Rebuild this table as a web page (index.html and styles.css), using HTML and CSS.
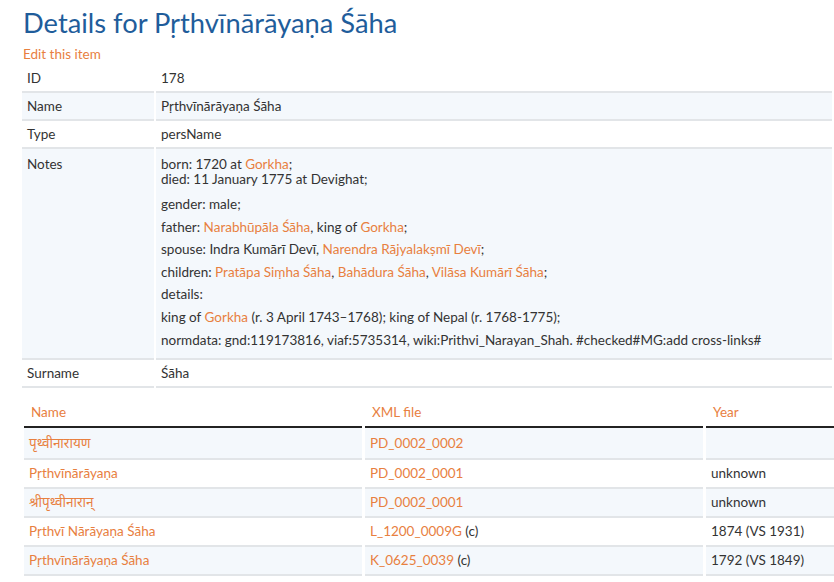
FILE: index.html
```html
<!DOCTYPE html>
<html>
<head>
<meta charset="utf-8">
<link rel="stylesheet" href="styles.css">
</head>
<body>
<div class="page">
  <h1 class="title">Details for Pṛthvīnārāyaṇa Śāha</h1>
  <a class="edit" href="#">Edit this item</a>
  <table class="details">
    <tr><td class="key">ID</td><td>178</td></tr>
    <tr class="alt"><td class="key">Name</td><td>Pṛthvīnārāyaṇa Śāha</td></tr>
    <tr><td class="key">Type</td><td>persName</td></tr>
    <tr class="alt notes-row"><td class="key">Notes</td><td>
      <div class="first">born: 1720 at <a href="#">Gorkha</a>;<br>died: 11 January 1775 at Devighat;</div>
      <div class="line">gender: male;</div>
      <div class="line">father: <a href="#">Narabhūpāla Śāha</a>, king of <a href="#">Gorkha</a>;</div>
      <div class="line">spouse: Indra Kumārī Devī, <a href="#">Narendra Rājyalakṣmī Devī</a>;</div>
      <div class="line">children: <a href="#">Pratāpa Siṃha Śāha</a>, <a href="#">Bahādura Śāha</a>, <a href="#">Vilāsa Kumārī Śāha</a>;</div>
      <div class="line">details:</div>
      <div class="line">king of <a href="#">Gorkha</a> (r. 3 April 1743–1768); king of Nepal (r. 1768-1775);</div>
      <div class="line">normdata: gnd:119173816, viaf:5735314, wiki:Prithvi_Narayan_Shah. #checked#MG:add cross-links#</div>
    </td></tr>
    <tr><td class="key">Surname</td><td>Śāha</td></tr>
  </table>
  <table class="names">
    <thead>
      <tr><th>Name</th><th>XML file</th><th>Year</th></tr>
    </thead>
    <tbody>
      <tr class="alt first-row"><td><a href="#" class="deva">पृथ्वीनारायण</a></td><td><a href="#">PD_0002_0002</a></td><td></td></tr>
      <tr><td><a href="#">Pṛthvīnārāyaṇa</a></td><td><a href="#">PD_0002_0001</a></td><td>unknown</td></tr>
      <tr class="alt"><td><a href="#" class="deva">श्रीपृथ्वीनारान्</a></td><td><a href="#">PD_0002_0001</a></td><td>unknown</td></tr>
      <tr><td><a href="#">Pṛthvī Nārāyaṇa Śāha</a></td><td><a href="#">L_1200_0009G</a> (c)</td><td>1874 (VS 1931)</td></tr>
      <tr class="alt"><td><a href="#">Pṛthvīnārāyaṇa Śāha</a></td><td><a href="#">K_0625_0039</a> (c)</td><td>1792 (VS 1849)</td></tr>
    </tbody>
  </table>
</div>
</body>
</html>
```

FILE: styles.css
```css
html, body {
  margin: 0;
  padding: 0;
  background: #ffffff;
  overflow: hidden;
}
body {
  font-family: "Lato", "Noto Sans Devanagari", "Noto Sans", sans-serif;
  font-size: 13.5px;
  color: #333333;
}
.page {
  padding: 0 0 0 22px;
  width: 1100px;
}
a {
  color: #e8803f;
  text-decoration: none;
}
.title {
  margin: 0;
  padding: 6px 0 0 1px;
  font-size: 27.3px;
  font-weight: 400;
  line-height: 34px;
  color: #1f5d9b;
}
.edit {
  display: block;
  margin: 6px 0 0 0;
  padding-left: 1px;
  line-height: 17px;
  font-size: 13.5px;
}
.details {
  border-collapse: separate;
  border-spacing: 2px 0;
  width: 814px;
  margin-left: -2px;
  margin-top: 2px;
}
.details td {
  padding: 6px 5px 5px 5px;
  line-height: 15px;
  border-bottom: 2px solid #e2e5e8;
  vertical-align: top;
}
.details td.key {
  width: 122px;
}
.details tr.alt td {
  background: #f4f8fc;
}
.notes-row td {
  padding-top: 8px;
  padding-bottom: 7px;
}
.first {
  line-height: 15px;
  margin-bottom: 6px;
}
.line {
  line-height: 22.6px;
}
.names {
  border-collapse: separate;
  border-spacing: 3px 0;
  margin-left: -1px;
  margin-top: 11px;
  table-layout: fixed;
  width: 1026px;
}
.names th {
  text-align: left;
  font-weight: 400;
  color: #e8803f;
  padding: 5px 7px 5px 7px;
  line-height: 17px;
  border-bottom: 2px solid #222222;
}
.names td {
  padding: 6px 5px 6px 5px;
  line-height: 15px;
  border-bottom: 2px solid #e2e5e8;
}
.names tr.first-row td {
  padding-top: 8px;
  padding-bottom: 7px;
}
.names tr.alt td {
  background: #f4f8fc;
}
```
